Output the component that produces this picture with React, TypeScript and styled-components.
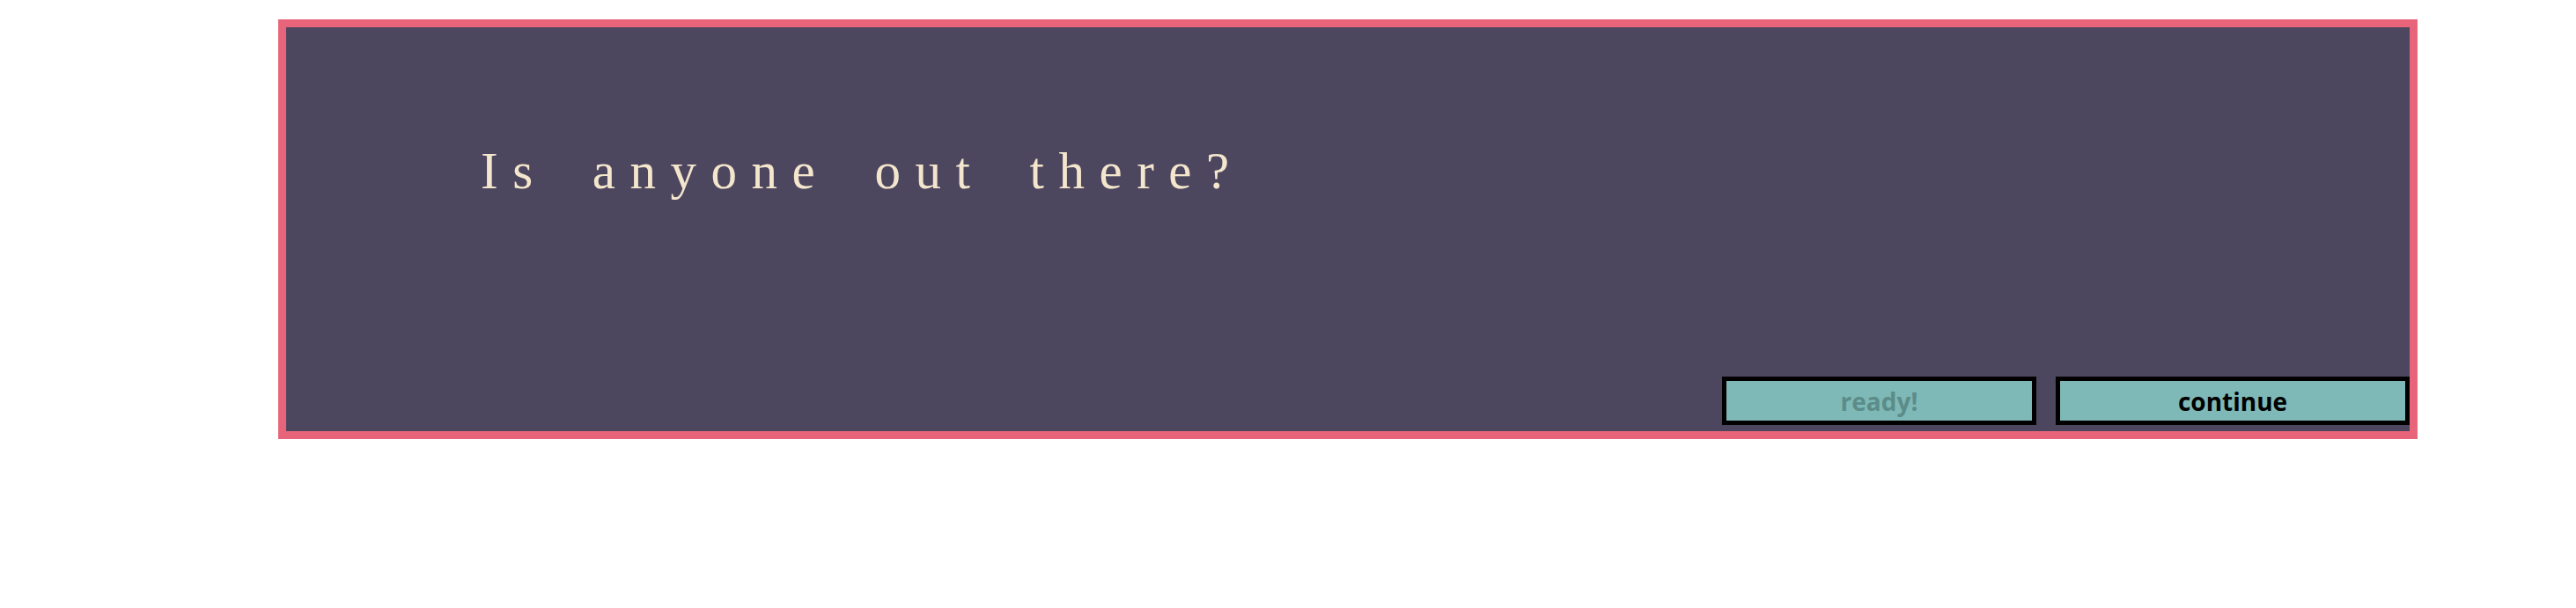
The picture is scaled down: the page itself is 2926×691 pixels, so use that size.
import styled, { createGlobalStyle } from 'styled-components';

const COLORS = {
  frame: '#e8647a',
  panel: '#4d465f',
  cream: '#f3e6cc',
  teal: '#7eb9b7',
  muted: '#5c8c89',
};

const GlobalStyle = createGlobalStyle`
  body {
    margin: 0;
    background: #ffffff;
  }
`;

type ButtonProps = { $muted?: boolean; $width: number };

const App = () => {
  return (
    <>
      <GlobalStyle />
      <Page>
        <Frame>
          <Message>Is anyone out there?</Message>
          <Actions>
            <ActionButton $muted $width={357}>
              ready!
            </ActionButton>
            <ActionButton $width={402}>continue</ActionButton>
          </Actions>
        </Frame>
      </Page>
    </>
  );
};

const Page = styled.div`
  padding: 22px 0 0 316px;
`;

const Frame = styled.div`
  box-sizing: border-box;
  display: flex;
  flex-direction: column;
  justify-content: space-between;
  width: 2430px;
  height: 477px;

  border: 9px solid ${COLORS.frame};
  background-color: ${COLORS.panel};
`;

const Message = styled.p`
  margin: 0;
  padding: 134px 0 0 221px;

  font-family: 'Liberation Serif', 'Times New Roman', serif;
  font-size: 59px;
  line-height: 1;
  letter-spacing: 16.5px;
  word-spacing: 20px;
  white-space: pre;
  color: ${COLORS.cream};
`;

const Actions = styled.div`
  display: flex;
  justify-content: flex-end;
  gap: 22px;
  padding-bottom: 7px;
`;

const ActionButton = styled.button<ButtonProps>`
  box-sizing: border-box;
  width: ${(p) => p.$width}px;
  height: 55px;
  padding: 0;

  font-family: 'Open Sans', 'Noto Sans', sans-serif;
  font-weight: 700;
  font-size: 28px;

  color: ${(p) => (p.$muted ? COLORS.muted : '#000000')};
  background-color: ${COLORS.teal};
  border: 5px solid #000000;
  border-radius: 0;
  cursor: pointer;
`;

export default App;
